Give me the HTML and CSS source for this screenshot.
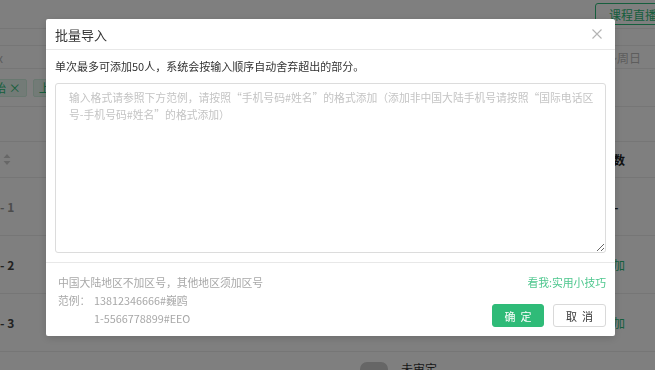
FILE: index.html
```html
<!DOCTYPE html>
<html lang="zh-CN">

<head>
    <meta charset="UTF-8">
    <title>批量导入</title>
    <link rel="stylesheet" href="styles.css">
</head>

<body>
    <div class="page">
        <div class="topbar">
            <span></span>
            <button class="live-btn">课程直播间</button>
        </div>
        <div class="bar"></div>
        <div class="filter">
            <span>x</span>
            <span class="filter-right">~周日</span>
        </div>
        <div class="tags">
            <span class="tag">开始 ×</span>
            <span class="tag">上</span>
        </div>
        <div class="gap-row"></div>
        <div class="row head">
            <svg class="sort" width="8" height="11" viewBox="0 0 8 11">
                <path d="M4 0L7.5 4H0.5Z M4 11L7.5 7H0.5Z" fill="#cfcfcf"/>
            </svg>
            <span class="cell-right">人数</span>
        </div>
        <div class="row">
            <span class="cell">- 1</span>
            <span class="cell-right dash">-</span>
        </div>
        <div class="row">
            <span class="cell dark">- 2</span>
            <span class="cell-right green">添加</span>
        </div>
        <div class="row">
            <span class="cell dark">- 3</span>
            <span class="cell-right green">添加</span>
        </div>
        <div class="bottom">
            <span class="switch"></span>
            <span>未审定</span>
        </div>
    </div>

    <div class="overlay">
        <div class="modal">
            <div class="modal-header">
                <span class="modal-title">批量导入</span>
                <svg class="close" width="10" height="10" viewBox="0 0 10 10">
                    <path d="M0.5 0.5L9.5 9.5M9.5 0.5L0.5 9.5" stroke="#b4b4b4" stroke-width="1.1" fill="none"/>
                </svg>
            </div>
            <div class="modal-body">
                <p class="hint">单次最多可添加50人，系统会按输入顺序自动舍弃超出的部分。</p>
                <textarea class="import-box" placeholder="输入格式请参照下方范例，请按照“手机号码#姓名”的格式添加（添加非中国大陆手机号请按照“国际电话区号-手机号码#姓名”的格式添加）"></textarea>
            </div>
            <div class="modal-footer">
                <div class="example">
                    <p>中国大陆地区不加区号，其他地区须加区号</p>
                    <div class="example-row">
                        <span class="example-label">范例：</span>
                        <span>13812346666#巍鸥<br>1-5566778899#EEO</span>
                    </div>
                </div>
                <div class="actions">
                    <a class="tips" href="#">看我:实用小技巧</a>
                    <div class="buttons">
                        <button class="btn-ok">确定</button>
                        <button class="btn-cancel">取消</button>
                    </div>
                </div>
            </div>
        </div>
    </div>
</body>

</html>
```

FILE: styles.css
```css
* {
    margin: 0;
    padding: 0;
    box-sizing: border-box;
    font-family: "Noto Sans CJK SC", "Noto Sans", sans-serif;
}

body {
    width: 655px;
    height: 370px;
    overflow: hidden;
    background: #fff;
    color: #333;
    font-size: 11px;
}

/* page under the overlay */

.page {
    display: flex;
    flex-direction: column;
}

.topbar {
    height: 29px;
    display: flex;
    justify-content: space-between;
    align-items: flex-start;
    padding-top: 3px;
    border-bottom: 1px solid #ececec;
}

.live-btn {
    height: 22px;
    width: 80px;
    margin-right: -20px;
    background: #fff;
    border: 1px solid #2dbd7a;
    border-radius: 3px;
    color: #2dbd7a;
    font-size: 12px;
    text-align: left;
    padding-left: 13px;
    white-space: nowrap;
    overflow: hidden;
}

.bar {
    height: 17px;
    border-bottom: 1px solid #ececec;
}

.filter {
    height: 23px;
    display: flex;
    justify-content: space-between;
    align-items: center;
    border-bottom: 1px solid #ececec;
    color: #bbb;
    font-size: 12px;
    padding-right: 14px;
}

.filter span:first-child {
    margin-left: -3px;
}

.tags {
    height: 38px;
    display: flex;
    align-items: center;
    gap: 6px;
    margin-left: -24px;
    border-bottom: 1px solid #ececec;
}

.tag {
    background: #e6f7ee;
    border: 1px solid #d3f0e1;
    color: #2dbd7a;
    font-size: 12px;
    padding: 0 5px;
    line-height: 16px;
    border-radius: 2px;
}

.gap-row {
    height: 35px;
    border-bottom: 1px solid #ececec;
}

.row {
    height: 58px;
    display: flex;
    justify-content: space-between;
    align-items: center;
    border-bottom: 1px solid #ececec;
    font-size: 12px;
    font-weight: bold;
}

.row.head {
    height: 36px;
}

.sort {
    margin-left: 3px;
}

.cell-right {
    width: 54px;
    color: #222;
}

.cell-right.dash {
    padding-left: 13px;
}

.cell {
    color: #999;
}

.cell.dark {
    color: #444;
}

.cell-right.green {
    color: #2dbd7a;
    font-weight: normal;
}

.bottom {
    display: flex;
    align-items: center;
    gap: 13px;
    padding-left: 360px;
    padding-top: 8px;
    font-size: 12px;
}

.switch {
    width: 28px;
    height: 14px;
    border-radius: 7px;
    background: #ccc;
}

/* dialog */

.overlay {
    position: fixed;
    top: 0;
    left: 0;
    width: 100%;
    height: 100%;
    background: rgba(0, 0, 0, 0.5);
    display: flex;
    align-items: flex-start;
    padding: 19px 0 0 46px;
}

.modal {
    width: 569px;
    background: #fff;
    border-radius: 2px;
    box-shadow: 0 2px 8px rgba(0, 0, 0, 0.15);
}

.modal-header {
    height: 31px;
    display: flex;
    justify-content: space-between;
    align-items: center;
    padding: 0 13px 0 9px;
    border-bottom: 1px solid #e8e8e8;
}

.modal-title {
    font-size: 13px;
    color: #333;
}

.modal-body {
    padding: 8px 9px 9px;
    border-bottom: 1px solid #e8e8e8;
}

.hint {
    font-size: 11px;
    line-height: 17px;
    color: #333;
}

.import-box {
    display: block;
    margin-top: 8px;
    width: 551px;
    height: 170px;
    padding: 5px 10px 5px 13px;
    border: 1px solid #dcdcdc;
    border-radius: 3px;
    font-size: 10.8px;
    line-height: 17px;
    color: #333;
    outline: none;
}

.import-box::placeholder {
    color: #c4c4c4;
}

.modal-footer {
    display: flex;
    justify-content: space-between;
    padding: 10px 9px 9px 12px;
    font-size: 10.8px;
    line-height: 18px;
    color: #a8a8a8;
}

.example-row {
    display: flex;
}

.example-label {
    width: 36px;
}

.actions {
    display: flex;
    flex-direction: column;
    justify-content: space-between;
    align-items: flex-end;
}

.tips {
    color: #4ec78e;
    text-decoration: none;
}

.buttons {
    display: flex;
    gap: 9px;
}

.buttons button {
    height: 23px;
    width: 52px;
    border-radius: 3px;
    font-size: 11px;
    letter-spacing: 5px;
    padding-left: 5px;
    cursor: pointer;
}

.btn-ok {
    background: #2fbb78;
    border: 1px solid #2fbb78;
    color: #fff;
}

.btn-cancel {
    background: #fff;
    border: 1px solid #d9d9d9;
    color: #333;
    width: 53px !important;
}
```
